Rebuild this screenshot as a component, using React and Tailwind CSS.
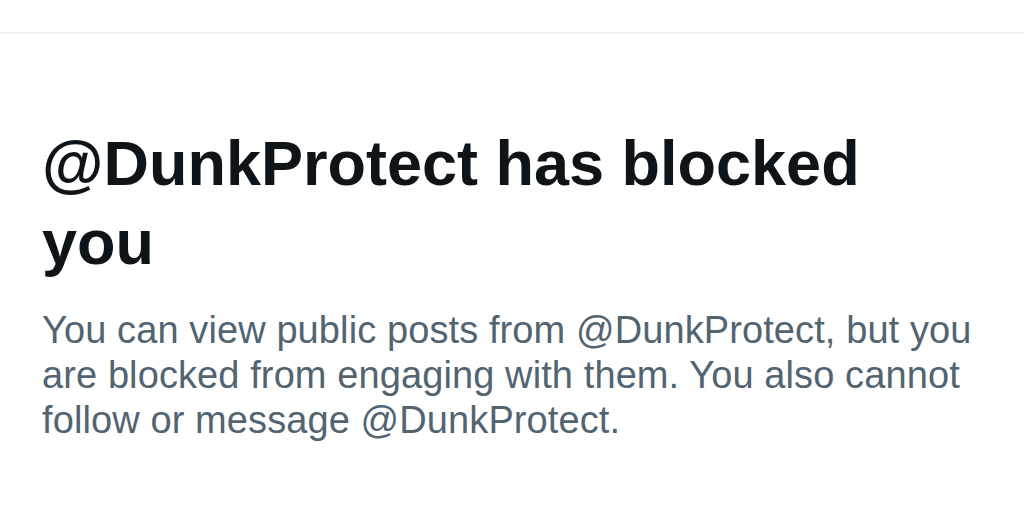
export default function App() {
  return (
    <div className="w-[1024px] h-[529px] bg-white overflow-hidden" style={{ fontFamily: '"Liberation Sans", Arial, sans-serif' }}>
      <div className="h-[32px]"></div>
      <div className="h-[2px] bg-[#eff3f4]"></div>
      <div className="px-[42px] pt-[90px]">
        <h1 className="max-w-[880px] text-[63px] leading-[79px] font-bold text-[#0f1419]">
          @DunkProtect has blocked you
        </h1>
        <p className="mt-[26px] text-[38px] leading-[45px] tracking-[0.1px] text-[#536471]">
          You can view public posts from @DunkProtect, but you are blocked from engaging with them. You also cannot follow or message @DunkProtect.
        </p>
      </div>
    </div>
  );
}
